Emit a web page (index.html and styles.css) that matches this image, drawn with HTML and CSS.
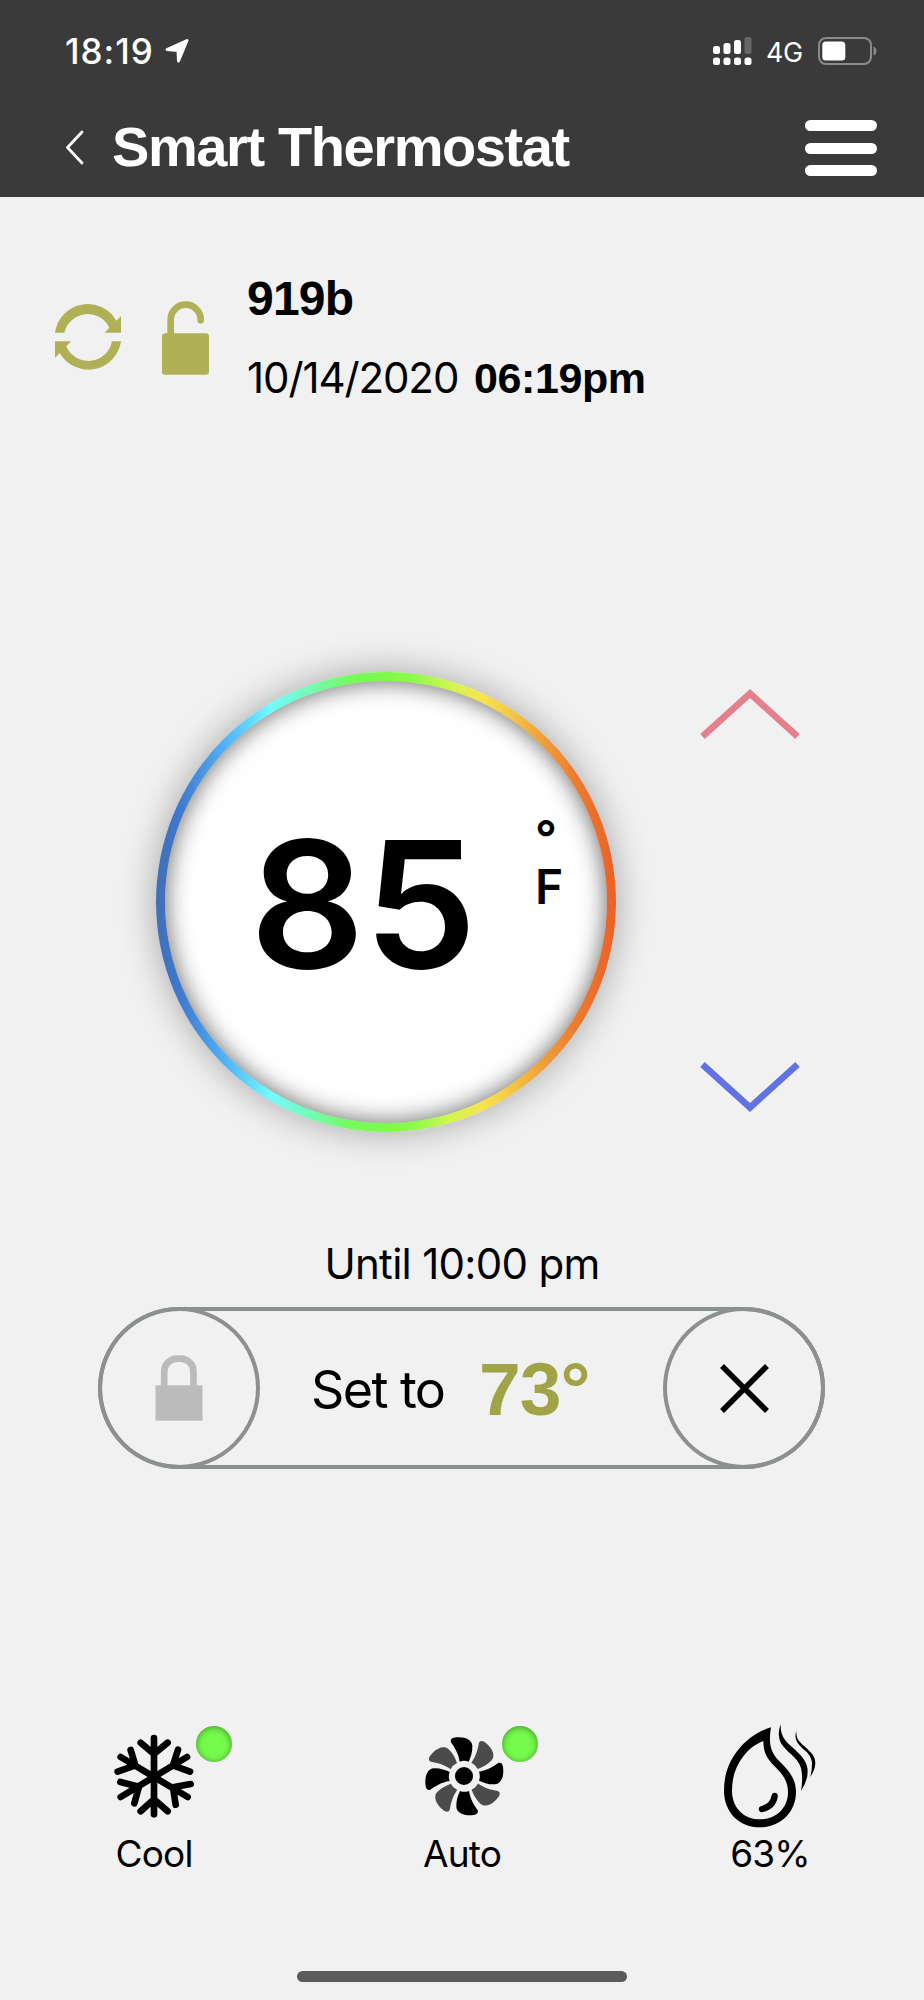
FILE: index.html
```
<!DOCTYPE html>
<html lang="en">
<head>
  <meta charset="UTF-8">
  <title>Smart Thermostat</title>
  <link rel="stylesheet" href="styles.css">
</head>
<body>
  <header>
    <div class="status-bar">
      <span class="clock">18:19</span>
      <svg class="location" width="26" height="26" viewBox="0 0 26 26">
        <path d="M3 11.5 L23 2.5 L14.5 23 L14 12.5 Z" fill="#fff" stroke="#fff" stroke-width="3" stroke-linejoin="round"/>
      </svg>
      <svg class="signal" width="39" height="28" viewBox="0 0 39 28" fill="#fff">
        <rect x="0" y="9" width="7" height="8" rx="2.5"/>
        <rect x="10.5" y="6" width="7" height="11" rx="2.5"/>
        <rect x="21" y="3" width="7" height="14" rx="2.5"/>
        <rect x="31.5" y="0" width="7" height="17" rx="2.5" fill="#666"/>
        <rect x="0" y="20.5" width="7" height="7.5" rx="2.5"/>
        <rect x="10.5" y="20.5" width="7" height="7.5" rx="2.5"/>
        <rect x="21" y="20.5" width="7" height="7.5" rx="2.5"/>
        <rect x="31.5" y="20.5" width="7" height="7.5" rx="2.5"/>
      </svg>
      <span class="network">4G</span>
      <svg class="battery" width="59" height="28" viewBox="0 0 59 28">
        <rect x="1" y="1" width="52" height="26" rx="7" fill="none" stroke="#8a8a8a" stroke-width="2"/>
        <rect x="4.3" y="4.5" width="23" height="19" rx="3.5" fill="#fff"/>
        <path d="M55.5 9.5 Q58.5 11 58.5 14 Q58.5 17 55.5 18.5 Z" fill="#8a8a8a"/>
      </svg>
    </div>
    <div class="nav">
      <svg class="back" width="20" height="36" viewBox="0 0 20 36">
        <path d="M17 2 L2.5 17.5 L17 33" fill="none" stroke="#fff" stroke-width="2.8" stroke-linecap="round" stroke-linejoin="round"/>
      </svg>
      <h1>Smart Thermostat</h1>
      <div class="menu">
        <span></span>
        <span></span>
        <span></span>
      </div>
    </div>
  </header>

  <section class="device">
    <svg class="sync" width="66" height="66" viewBox="75 133 198 198" fill="#b0b056">
      <path d="M75 219 A99 99 0 0 1 259 183 L273 169 V219 H224 L238 204 A72 72 0 0 0 103 219 Z"/>
      <path d="M273 245 A99 99 0 0 1 89 280 L75 294 V245 H123 L109 260 A72 72 0 0 0 246 245 Z"/>
    </svg>
    <svg class="unlock" width="47" height="74" viewBox="396 122 141 222">
      <rect x="396" y="219" width="141" height="124" rx="9" fill="#b0b056"/>
      <path d="M422 222 V178 A45 45 0 0 1 512 178 V180" fill="none" stroke="#b0b056" stroke-width="20" stroke-linecap="round"/>
    </svg>
    <div class="device-info">
      <div class="device-name">919b</div>
      <div class="device-time">
        <span class="date">10/14/2020</span>
        <span class="time">06:19pm</span>
      </div>
    </div>
  </section>

  <section class="thermostat">
    <div class="dial">
      <div class="dial-face">
        <span class="temp">85</span>
        <div class="unit">
          <span class="degree">°</span>
          <span class="scale">F</span>
        </div>
      </div>
    </div>
    <div class="arrows">
      <svg width="100" height="50" viewBox="0 0 100 50">
        <path d="M2.5 47.5 L50 4.5 L97.5 47.5" fill="none" stroke="#e47f8d" stroke-width="6.6"/>
      </svg>
      <svg width="100" height="50" viewBox="0 0 100 50">
        <path d="M2.5 2.5 L50 45.5 L97.5 2.5" fill="none" stroke="#6173e2" stroke-width="6.6"/>
      </svg>
    </div>
  </section>

  <section class="hold">
    <div class="until">Until 10:00 pm</div>
    <div class="set-bar">
      <div class="round">
        <svg width="48" height="66" viewBox="229 404 143 198">
          <rect x="230" y="495" width="141" height="106" fill="#bbb"/>
          <path d="M256 497 V454 A39 39 0 0 1 295 415 H305 A39 39 0 0 1 344 454 V497" fill="none" stroke="#bbb" stroke-width="20"/>
        </svg>
      </div>
      <div class="set-text">
        <span class="set-label">Set to</span>
        <span class="set-temp">73°</span>
      </div>
      <div class="round">
        <svg width="49" height="49" viewBox="0 0 49 49">
          <path d="M2 2 L47 47 M47 2 L2 47" stroke="#000" stroke-width="5.5"/>
        </svg>
      </div>
    </div>
  </section>

  <section class="modes">
    <div class="mode">
      <div class="mode-icon">
        <svg width="80" height="84" viewBox="72 70 240 252" fill="none" stroke="#000" stroke-width="20" stroke-linecap="round" stroke-linejoin="round">
          <path d="M192 82 V311 M152 96 L192 130 L233 96 M152 302 L192 266 L233 302"/>
          <path d="M92 139 L293 259 M122 118 L136 164 L83 183 M302 220 L249 230 L257 282"/>
          <path d="M291 139 L92 259 M264 117 L249 164 L300 183 M91 214 L147 228 L133 278"/>
        </svg>
        <span class="dot dot-cool"></span>
      </div>
      <div class="mode-label">Cool</div>
    </div>
    <div class="mode">
      <div class="mode-icon">
        <svg class="fan" width="81" height="81" viewBox="72 78 243 243">
          <defs>
            <path id="blade" d="M179 155 C175 130 164 113 153 97 C149 86 160 82 176 82 C200 82 216 92 217 107 C218 126 212 142 206 155 Q193 150 179 155 Z"/>
          </defs>
          <g fill="#4b4b4b">
            <use href="#blade" transform="rotate(45 193 199)"/>
            <use href="#blade" transform="rotate(135 193 199)"/>
            <use href="#blade" transform="rotate(225 193 199)"/>
            <use href="#blade" transform="rotate(315 193 199)"/>
          </g>
          <use href="#blade"/>
          <use href="#blade" transform="rotate(90 193 199)"/>
          <use href="#blade" transform="rotate(180 193 199)"/>
          <use href="#blade" transform="rotate(270 193 199)"/>
          <circle cx="192" cy="198" r="27"/>
        </svg>
        <span class="dot dot-fan"></span>
      </div>
      <div class="mode-label">Auto</div>
    </div>
    <div class="mode">
      <div class="mode-icon">
        <svg class="drop" width="93" height="104" viewBox="69 42 279 312">
          <path fill-rule="evenodd" d="M213 52 C180 61 139 87 111 124 C84 160 72 198 72 242 C72 307 118 352 180 352 C242 352 288 306 288 246 C288 204 263 178 237 152 C212 126 205 103 213 52 Z M190 93 C190 128 201 146 226 171 C248 193 264 213 264 247 C264 293 230 328 181 328 C132 328 96 294 96 242 C96 202 107 169 130 139 C147 117 166 102 190 93 Z"/>
          <path d="M224 258 Q219 290 186 297" fill="none" stroke="#000" stroke-width="19" stroke-linecap="round"/>
          <path d="M242 42 Q230 75 243 100 C252 113 261 122 270 130 Q296 152 303 174 Q310 205 303 243 Q323 212 323 184 Q323 162 308 143 C300 133 292 125 282 116 C262 98 240 84 242 42 Z"/>
          <path d="M289 63 Q282 82 293 99 C302 111 312 119 321 127 Q334 142 336 158 Q337 176 331 201 Q345 180 346 160 Q346 142 334 129 C326 120 317 112 309 105 C296 93 288 84 289 63 Z"/>
        </svg>
      </div>
      <div class="mode-label">63%</div>
    </div>
  </section>

  <div class="home-indicator"></div>
</body>
</html>
```

FILE: styles.css
```
* {
  box-sizing: border-box;
}
body {
  margin: 0;
  width: 924px;
  height: 2000px;
  overflow: hidden;
  background: #f1f1f1;
  color: #000;
  font-family: Inter, "Liberation Sans", sans-serif;
}
svg {
  display: block;
  flex: none;
}
header {
  height: 197px;
  background: #3a3a3a;
  color: #fff;
}
.status-bar {
  display: flex;
  align-items: center;
  height: 101px;
  padding: 0 47px 0 65px;
}
.clock {
  font-size: 35px;
  font-weight: 550;
  letter-spacing: 1px;
  width: 99px;
}
.signal {
  margin-left: auto;
}
.network {
  font-size: 27px;
  letter-spacing: -0.5px;
  margin: 4px 15px 0 14px;
  width: 37px;
}
.nav {
  display: flex;
  align-items: center;
  height: 94px;
  padding: 0 47px 0 65px;
}
h1 {
  margin: -3px 0 0 27px;
  font: bold 56px "Liberation Sans", sans-serif;
  letter-spacing: -1.4px;
}
.menu {
  display: flex;
  flex-direction: column;
  gap: 11.5px;
  width: 72px;
  margin-left: auto;
}
.menu span {
  height: 11px;
  border-radius: 6px;
  background: #fff;
}

.device {
  display: flex;
  height: 475px;
  padding: 79px 0 0 55px;
}
.sync {
  margin-top: 28px;
}
.unlock {
  margin: 25px 38px 0 41px;
}
.device-name {
  font: bold 48px/46px "Liberation Sans", sans-serif;
  letter-spacing: -0.8px;
}
.device-time {
  display: flex;
  align-items: baseline;
  margin-top: 31px;
  line-height: 50px;
}
.date {
  font-size: 42px;
  letter-spacing: -1.1px;
  width: 227px;
}
.time {
  font: bold 43px "Liberation Sans", sans-serif;
  letter-spacing: -0.4px;
}

.thermostat {
  display: flex;
  align-items: center;
  gap: 84px;
  height: 460px;
  padding-left: 156px;
}
.dial {
  width: 460px;
  height: 460px;
  padding: 9px;
  border-radius: 50%;
  background: linear-gradient(90deg, #426fb5 0%, #4078cc 5%, #4a9ae6 11%, #55b8f8 16%, #72fbfd 25%, #74fbb0 34%, #75fb5c 42%, #7dfa49 50%, #8efa4b 56%, #d0f650 64%, #f9e24f 71%, #f4c244 78%, #f0a03a 84%, #ec7d30 91%, #ea6127 100%);
  box-shadow: 0 0 36px rgba(0, 0, 0, 0.32);
}
.dial-face {
  display: flex;
  align-items: center;
  height: 100%;
  padding-left: 85px;
  border-radius: 50%;
  background: #fff;
  box-shadow: inset 0 0 25px rgba(0, 0, 0, 0.62);
}
.temp {
  width: 285px;
  font-size: 176px;
  font-weight: 600;
  line-height: 180px;
  letter-spacing: -1px;
  padding-top: 3px;
  transform: scaleX(1.02);
  transform-origin: left;
}
.unit {
  display: flex;
  flex-direction: column;
  height: 90px;
  margin-top: -98px;
  font-size: 48px;
  font-weight: 600;
}
.degree {
  line-height: 60px;
}
.scale {
  margin-top: -6px;
  line-height: 50px;
}
.arrows {
  display: flex;
  flex-direction: column;
  justify-content: space-between;
  height: 423px;
  margin-top: -3px;
}

.hold {
  height: 602px;
  padding: 107px 98px 0;
}
.until {
  font-size: 42px;
  line-height: 50px;
  letter-spacing: -0.7px;
  text-align: center;
}
.set-bar {
  display: flex;
  justify-content: space-between;
  width: 727px;
  height: 162px;
  margin-top: 18px;
  border-radius: 82px;
  box-shadow: inset 0 0 0 4px #8c908e;
}
.round {
  display: flex;
  align-items: center;
  justify-content: center;
  width: 162px;
  border: 4px solid #8c908e;
  border-radius: 50%;
}
.set-text {
  display: flex;
  flex: 1;
  align-items: center;
  padding-left: 51px;
}
.set-label {
  width: 168px;
  padding-top: 3px;
  font-size: 52px;
  letter-spacing: -1.6px;
}
.set-temp {
  padding-top: 2px;
  font: bold 75px "Liberation Sans", sans-serif;
  letter-spacing: -1px;
  color: #a1a347;
}

.modes {
  display: grid;
  grid-template-columns: repeat(3, 308px);
  height: 197px;
}
.mode {
  display: flex;
  flex-direction: column;
  align-items: center;
}
.mode-icon {
  position: relative;
  display: flex;
  align-items: center;
  height: 84px;
}
.fan {
  margin: 1px 0 0 4px;
}
.drop {
  margin-right: 2px;
}
.mode-label {
  margin-top: 14px;
  font-size: 37px;
  line-height: 44px;
  letter-spacing: -0.8px;
}
.dot {
  position: absolute;
  top: -8px;
  width: 36px;
  height: 36px;
  border-radius: 50%;
  background: #76fb4c;
  box-shadow: inset 0 1px 7px rgba(0, 0, 0, 0.42);
}
.dot-cool {
  left: 82px;
}
.dot-fan {
  left: 82px;
}
.home-indicator {
  width: 330px;
  height: 11px;
  margin: 40px auto 0;
  border-radius: 6px;
  background: #5b5b5b;
}
```
